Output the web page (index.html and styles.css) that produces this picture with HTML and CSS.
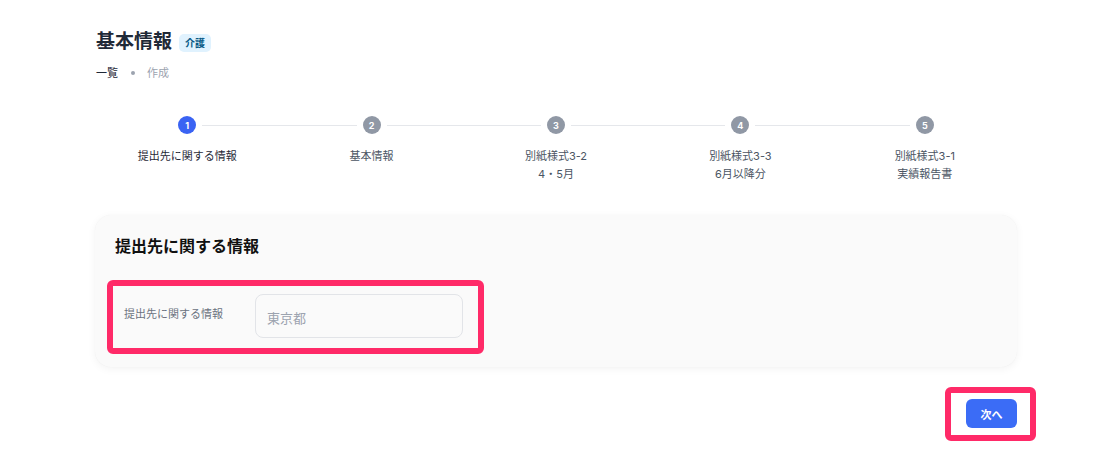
FILE: index.html
```html
<!DOCTYPE html>
<html lang="ja">
<head>
<meta charset="utf-8">
<title>基本情報</title>
<link rel="stylesheet" href="styles.css">
</head>
<body>
<div class="page">
  <div class="title-row">
    <h1 class="title">基本情報</h1>
    <span class="badge">介護</span>
  </div>
  <div class="crumbs">
    <span class="crumb-link">一覧</span>
    <span class="crumb-dot"></span>
    <span class="crumb-current">作成</span>
  </div>

  <div class="stepper">
    <div class="step first active">
      <div class="step-head"><span class="line"></span><span class="num">1</span><span class="line"></span></div>
      <div class="step-label">提出先に関する情報</div>
    </div>
    <div class="step">
      <div class="step-head"><span class="line"></span><span class="num">2</span><span class="line"></span></div>
      <div class="step-label">基本情報</div>
    </div>
    <div class="step">
      <div class="step-head"><span class="line"></span><span class="num">3</span><span class="line"></span></div>
      <div class="step-label">別紙様式3-2<br>4・5月</div>
    </div>
    <div class="step">
      <div class="step-head"><span class="line"></span><span class="num">4</span><span class="line"></span></div>
      <div class="step-label">別紙様式3-3<br>6月以降分</div>
    </div>
    <div class="step last">
      <div class="step-head"><span class="line"></span><span class="num">5</span><span class="line"></span></div>
      <div class="step-label">別紙様式3-1<br>実績報告書</div>
    </div>
  </div>

  <section class="card">
    <h2 class="card-title">提出先に関する情報</h2>
    <div class="highlight field">
      <label class="field-label">提出先に関する情報</label>
      <div class="input">東京都</div>
    </div>
  </section>

  <div class="actions">
    <div class="highlight btn-wrap">
      <button class="btn-next">次へ</button>
    </div>
  </div>
</div>
</body>
</html>
```

FILE: styles.css
```css
* { box-sizing: border-box; }
html, body { margin: 0; padding: 0; background: #ffffff; }
body {
  font-family: "Inter", "Noto Sans CJK JP", "Noto Sans", sans-serif;
  color: #1f2937;
}
.page {
  width: 922px;
  margin-left: 95px;
  padding-top: 28px;
}
.title-row {
  display: flex;
  align-items: center;
  gap: 7px;
  height: 28px;
}
.title {
  margin: 0;
  font-size: 19px;
  line-height: 28px;
  font-weight: 700;
  color: #1f2937;
  padding-left: 1px;
}
.badge {
  display: inline-block;
  background: #e0f2fe;
  color: #075985;
  font-size: 10px;
  font-weight: 700;
  line-height: 18px;
  padding: 0 6px;
  border-radius: 5px;
  margin-top: 1px;
}
.crumbs {
  display: flex;
  align-items: center;
  margin-top: 9px;
  font-size: 11px;
  line-height: 16px;
  padding-left: 1px;
}
.crumb-link { color: #1f2937; }
.crumb-dot {
  width: 4px;
  height: 4px;
  border-radius: 50%;
  background: #9ca3af;
  margin: 0 12px 0 13px;
}
.crumb-current { color: #9ca3af; }

.stepper {
  display: grid;
  grid-template-columns: repeat(5, 1fr);
  margin-top: 35px;
}
.step-head {
  display: flex;
  align-items: center;
  height: 18px;
}
.line {
  flex: 1;
  height: 1px;
  background: #e5e7eb;
}
.step-head .line:first-child { margin-right: 6px; }
.step-head .line:last-child { margin-left: 6px; }
.step.first .line:first-child,
.step.last .line:last-child { background: transparent; }
.num {
  width: 18px;
  height: 18px;
  border-radius: 50%;
  background: #9098a5;
  color: #ffffff;
  font-size: 9px;
  font-weight: 700;
  display: flex;
  align-items: center;
  justify-content: center;
}
.step.active .num { background: #3a63f3; }
.step-label {
  margin-top: 13px;
  text-align: center;
  font-size: 11px;
  line-height: 18px;
  color: #4b5563;
}
.step.active .step-label { color: #1f2937; }

.card {
  margin-top: 32px;
  background: #fafafa;
  border-radius: 16px;
  box-shadow: 0 2px 8px rgba(0, 0, 0, 0.05), 0 0 1px rgba(0, 0, 0, 0.06);
  padding: 20px 20px 13px 20px;
}
.card-title {
  margin: 0;
  font-size: 16px;
  line-height: 22px;
  font-weight: 700;
  color: #111111;
}
.highlight {
  border: 6px solid #ff2a68;
  border-radius: 6px;
}
.field {
  margin-top: 23px;
  margin-left: -8px;
  width: 377px;
  display: flex;
  align-items: center;
  padding: 8px 15px 10px 11px;
}
.field-label {
  width: 131px;
  font-size: 11px;
  line-height: 16px;
  color: #6b7280;
  margin-top: -4px;
}
.input {
  width: 208px;
  height: 44px;
  border: 1px solid #e2e4e8;
  border-radius: 8px;
  background: #fafafa;
  color: #9ca3af;
  font-size: 13px;
  display: flex;
  align-items: center;
  padding: 2px 0 0 11px;
}
.actions {
  display: flex;
  justify-content: flex-end;
  margin-top: 20px;
}
.btn-wrap {
  margin-right: -19px;
  padding: 6px 13px 7px 15px;
  background: #ffffff;
}
.btn-next {
  display: block;
  width: 51px;
  height: 29px;
  border: none;
  border-radius: 6px;
  background: #3b6cf6;
  color: #ffffff;
  font-family: inherit;
  font-size: 11px;
  font-weight: 700;
  padding: 0;
}
```
